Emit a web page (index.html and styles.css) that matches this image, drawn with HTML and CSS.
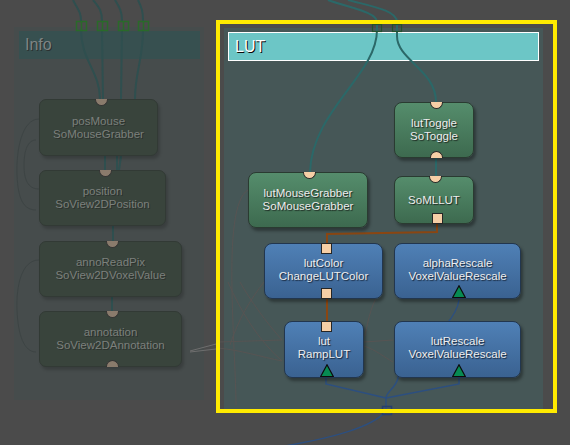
FILE: index.html
```html
<!DOCTYPE html>
<html>
<head>
<meta charset="utf-8">
<title>LUT network</title>
<link rel="stylesheet" href="styles.css">
</head>
<body>
<div class="canvas">
  <div class="group group-info"><div class="group-header">Info</div></div>
  <div class="group group-lut"><div class="group-header">LUT</div></div>

  <svg class="wires" width="570" height="445" viewBox="0 0 570 445">
    <defs>
      <marker id="arrowDim" markerWidth="6" markerHeight="6" refX="5" refY="3" orient="auto" markerUnits="userSpaceOnUse">
        <path d="M0,0 L6,3 L0,6 Z" fill="#3d4444"/>
      </marker>
      <marker id="arrowFaint" markerWidth="6" markerHeight="6" refX="5" refY="3" orient="auto" markerUnits="userSpaceOnUse">
        <path d="M0,0 L6,3 L0,6 Z" fill="#645a56"/>
      </marker>
      <marker id="arrowGray" markerWidth="6" markerHeight="6" refX="5" refY="3" orient="auto" markerUnits="userSpaceOnUse">
        <path d="M0,0 L6,3 L0,6 Z" fill="#6e6e6e"/>
      </marker>
    </defs>

    <!-- faded Info wires -->
    <g class="w-dimteal">
      <path d="M73,0 C78,10 81,12 81,21"/>
      <path d="M81,30 C81,60 100,72 100,99"/>
      <path d="M93,0 C100,8 102,12 102,21"/>
      <path d="M102,30 L103,99"/>
      <path d="M115,0 C120,8 122,12 122,21"/>
      <path d="M122,30 L121,99"/>
      <path d="M138,0 C142,8 143,12 143,21"/>
      <path d="M143,30 C143,60 135,72 135,99"/>
      <path d="M105,156 L105,170"/>
      <path d="M117,156 L117,170"/>
      <path d="M121,156 L119,170"/>
      <path d="M113,226 L113,241"/>
      <path d="M112,297 L112,311"/>
    </g>
    <g class="ports-green">
      <rect x="76.5" y="21.5" width="10" height="9"/><line x1="81.5" y1="21.5" x2="81.5" y2="30.5"/>
      <rect x="97.5" y="21.5" width="10" height="9"/><line x1="102.5" y1="21.5" x2="102.5" y2="30.5"/>
      <rect x="118.5" y="21.5" width="10" height="9"/><line x1="123.5" y1="21.5" x2="123.5" y2="30.5"/>
      <rect x="138.5" y="21.5" width="10" height="9"/><line x1="143.5" y1="21.5" x2="143.5" y2="30.5"/>
    </g>
    <g class="w-dimarrow">
      <path d="M39,119 C22,119 16,150 17,175 C18,200 24,210 36,210" marker-end="url(#arrowDim)"/>
      <path d="M39,189 C28,189 24,180 24,165 C24,150 28,140 36,140" marker-end="url(#arrowDim)"/>
      <path d="M39,260 C22,260 16,285 17,310 C18,335 24,352 36,352" marker-end="url(#arrowDim)"/>
    </g>
    <g class="w-gray">
      <path d="M216,344 L190,351" marker-end="url(#arrowGray)"/>
      <path d="M216,349 L190,352"/>
    </g>

    <!-- faint links inside LUT -->
    <g class="w-faint">
      <path d="M218,342 L282,340" marker-end="url(#arrowFaint)"/>
      <path d="M218,348 C240,350 262,357 282,361" marker-end="url(#arrowFaint)"/>
      <path d="M228,282 C240,310 258,340 282,361"/>
      <path d="M240,282 C250,300 266,322 282,340"/>
      <path d="M248,190 C234,198 231,240 232,290 C233,340 236,380 236,405"/>
      <path d="M264,282 C250,300 238,320 230,345"/>
      <path d="M364,342 L393,340" marker-end="url(#arrowFaint)"/>
      <path d="M364,346 C376,350 384,357 393,362" marker-end="url(#arrowFaint)"/>
      <path d="M383,288 C372,300 368,320 365,336"/>
    </g>

    <!-- teal wires -->
    <g class="w-teal">
      <path d="M328,0 C350,8 377,12 377,22 L377,30 C377,75 312,110 310,172"/>
      <path d="M348,0 C370,6 397,10 397,22 L397,36 C397,60 436,70 436,102"/>
      <path d="M436,158 L436,176"/>
    </g>
    <g class="ports-lut">
      <rect x="372.5" y="24.5" width="9" height="7"/>
      <rect x="392.5" y="24.5" width="9" height="7"/>
    </g>

    <!-- brown wires -->
    <g class="w-brown">
      <path d="M437,224 L437,232 L327,234 L327,243"/>
      <path d="M327,299 L327,321"/>
    </g>

    <!-- blue wires -->
    <g class="w-blue">
      <path d="M326,378 L326,384 L386,398"/>
      <path d="M459,378 L459,384 L386,398"/>
      <path d="M459,300 C455,330 400,360 398,378 C396,388 386,392 386,398"/>
      <path d="M386,398 L386,411 C372,428 330,438 285,446"/>
      <rect class="outport" x="382.5" y="406.5" width="9" height="8"/>
    </g>
  </svg>

  <!-- faded nodes -->
  <div class="node faded n-posmouse">
    <span class="port semi-in dim p-pm"></span>
    <span>posMouse</span><span>SoMouseGrabber</span>
  </div>
  <div class="node faded n-position">
    <span class="port semi-in dim p-pos"></span>
    <span>position</span><span>SoView2DPosition</span>
  </div>
  <div class="node faded n-annoread">
    <span class="port semi-in dim p-arp"></span>
    <span>annoReadPix</span><span>SoView2DVoxelValue</span>
  </div>
  <div class="node faded n-annotation">
    <span class="port semi-in dim p-arp"></span>
    <span>annotation</span><span>SoView2DAnnotation</span>
    <span class="port semi-out dim p-arp"></span>
  </div>

  <!-- LUT nodes -->
  <div class="node green n-luttoggle">
    <span class="port semi-in p-tog"></span>
    <span>lutToggle</span><span>SoToggle</span>
    <span class="port semi-out p-tog"></span>
  </div>
  <div class="node green n-lutmouse">
    <span class="port semi-in p-mouse"></span>
    <span>lutMouseGrabber</span><span>SoMouseGrabber</span>
  </div>
  <div class="node green n-somllut">
    <span class="port semi-in p-ml"></span>
    <span>SoMLLUT</span>
    <span class="port sq sq-bottom p-mlsq"></span>
  </div>
  <div class="node blue n-lutcolor">
    <span class="port sq sq-top p-col"></span>
    <span>lutColor</span><span>ChangeLUTColor</span>
    <span class="port sq sq-bottom p-col"></span>
  </div>
  <div class="node blue n-alpha">
    <span>alphaRescale</span><span>VoxelValueRescale</span>
    <svg class="tri p-tri-a" width="14" height="13" viewBox="0 0 14 13"><polygon points="7,0.8 13.3,12.5 0.7,12.5"/></svg>
  </div>
  <div class="node blue n-lut">
    <span class="port sq sq-top p-lut"></span>
    <span>lut</span><span>RampLUT</span>
    <svg class="tri p-tri-l" width="14" height="13" viewBox="0 0 14 13"><polygon points="7,0.8 13.3,12.5 0.7,12.5"/></svg>
  </div>
  <div class="node blue n-lutrescale">
    <span>lutRescale</span><span>VoxelValueRescale</span>
    <svg class="tri p-tri-a" width="14" height="13" viewBox="0 0 14 13"><polygon points="7,0.8 13.3,12.5 0.7,12.5"/></svg>
  </div>

  <div class="selection"></div>
</div>
</body>
</html>
```

FILE: styles.css
```css
html, body {
  margin: 0;
  padding: 0;
  background: #4b4b4b;
}

.canvas {
  position: relative;
  width: 570px;
  height: 445px;
  overflow: hidden;
  background: #4b4b4b;
  font-family: "Liberation Sans", Arial, sans-serif;
}

/* groups */
.group {
  position: absolute;
  box-sizing: border-box;
  padding: 4px;
  display: flex;
  flex-direction: column;
}
.group-info {
  left: 14px;
  top: 27px;
  width: 190px;
  height: 373px;
  background: #464c4c;
  padding: 4px 4px 4px 5px;
}
.group-lut {
  left: 224px;
  top: 28px;
  width: 319px;
  height: 381px;
  background: #465757;
}
.group-header {
  height: 29px;
  box-sizing: border-box;
  display: flex;
  align-items: center;
  padding-left: 6px;
  font-size: 16px;
}
.group-info .group-header {
  background: #375050;
  color: #7e8484;
  text-shadow: 1px 1px 0 #2b3131;
  padding-left: 6px;
  height: 28px;
}
.group-lut .group-header {
  background: #6cc6c6;
  border: 1px solid #ffffff;
  color: #ffffff;
  text-shadow: 1px 1px 0 #0a0a0a;
}

/* wires */
.wires {
  position: absolute;
  left: 0;
  top: 0;
  z-index: 1;
}
.wires path, .wires line, .wires rect { fill: none; }
.w-dimteal path { stroke: #2f4f4f; stroke-width: 2; }
.ports-green rect, .ports-green line { stroke: #2a6a2a; stroke-width: 1.5; }
.w-dimarrow path { stroke: #3d4444; stroke-width: 1; }
.w-gray path { stroke: #6e6e6e; stroke-width: 1; }
.w-faint path { stroke: #575453; stroke-width: 1; }
.w-teal path { stroke: #2b6868; stroke-width: 2; }
.ports-lut rect { stroke: #23522e; stroke-width: 1.2; }
.w-brown path { stroke: #8a4612; stroke-width: 2; }
.w-blue path { stroke: #2c4f80; stroke-width: 1.4; }
.w-blue .outport { stroke: #263f6e; stroke-width: 1.5; }

/* nodes */
.node {
  position: absolute;
  z-index: 2;
  box-sizing: border-box;
  border-radius: 8px;
  display: flex;
  flex-direction: column;
  align-items: center;
  justify-content: center;
  font-size: 11.5px;
  line-height: 13px;
  text-align: center;
  white-space: nowrap;
}
.node.green {
  background: linear-gradient(#558d6c, #3d6a4f);
  border: 1px solid #2a3b31;
  color: #ededed;
  text-shadow: 1px 1px 1px #1b261f;
  box-shadow: 2px 3px 3px rgba(0, 0, 0, 0.35);
}
.node.blue {
  background: linear-gradient(#4f80b6, #3a6291);
  border: 1px solid #22364e;
  color: #eeeeee;
  text-shadow: 1px 1px 1px #17263a;
  box-shadow: 2px 3px 3px rgba(0, 0, 0, 0.35);
  padding-bottom: 3px;
}
.node.faded {
  background: #39443c;
  border: 1px solid #323a35;
  color: #7c807c;
  text-shadow: 1px 1px 0 #2c322e;
  box-shadow: 2px 3px 3px rgba(0, 0, 0, 0.18);
  border-radius: 7px;
}

.n-posmouse   { left: 39px;  top: 99px;  width: 119px; height: 57px; }
.n-position   { left: 39px;  top: 170px; width: 127px; height: 56px; }
.n-annoread   { left: 39px;  top: 241px; width: 143px; height: 56px; }
.n-annotation { left: 39px;  top: 311px; width: 143px; height: 56px; }

.n-luttoggle  { left: 394px; top: 102px; width: 80px;  height: 56px; }
.n-lutmouse   { left: 248px; top: 172px; width: 120px; height: 56px; }
.n-somllut    { left: 394px; top: 176px; width: 80px;  height: 48px; }
.n-lutcolor   { left: 264px; top: 243px; width: 119px; height: 56px; }
.n-alpha      { left: 394px; top: 243px; width: 127px; height: 56px; }
.n-lut        { left: 284px; top: 321px; width: 80px;  height: 57px; }
.n-lutrescale { left: 394px; top: 321px; width: 127px; height: 57px; }

/* ports */
.port {
  position: absolute;
  box-sizing: border-box;
  background: #f6cfa6;
  border: 1px solid #262626;
}
.port.dim {
  background: #8a7b6c;
  border-color: #343434;
}
.semi-in {
  top: -1px;
  width: 13px;
  height: 7px;
  border-top: none;
  border-radius: 0 0 7px 7px;
}
.semi-out {
  bottom: -1px;
  width: 13px;
  height: 7px;
  border-bottom: none;
  border-radius: 7px 7px 0 0;
}
.sq {
  width: 11px;
  height: 11px;
}
.sq-top { top: -1px; }
.sq-bottom { bottom: -1px; }

.p-pm    { left: 55px; }
.p-pos   { left: 59px; }
.p-arp   { left: 66px; }
.p-tog   { left: 35px; }
.p-mouse { left: 54px; }
.p-ml    { left: 34px; }
.p-mlsq  { left: 37px; }
.p-col   { left: 56px; }
.p-lut   { left: 36px; }

.tri {
  position: absolute;
  bottom: 0;
}
.tri polygon {
  fill: #078a52;
  stroke: #0c0c0c;
  stroke-width: 1.2;
  stroke-linejoin: miter;
}
.p-tri-a { left: 57px; }
.p-tri-l { left: 35px; }

/* selection frame */
.selection {
  position: absolute;
  z-index: 3;
  left: 216px;
  top: 20px;
  width: 341px;
  height: 393px;
  box-sizing: border-box;
  border: 4px solid #ffeb00;
}
```
